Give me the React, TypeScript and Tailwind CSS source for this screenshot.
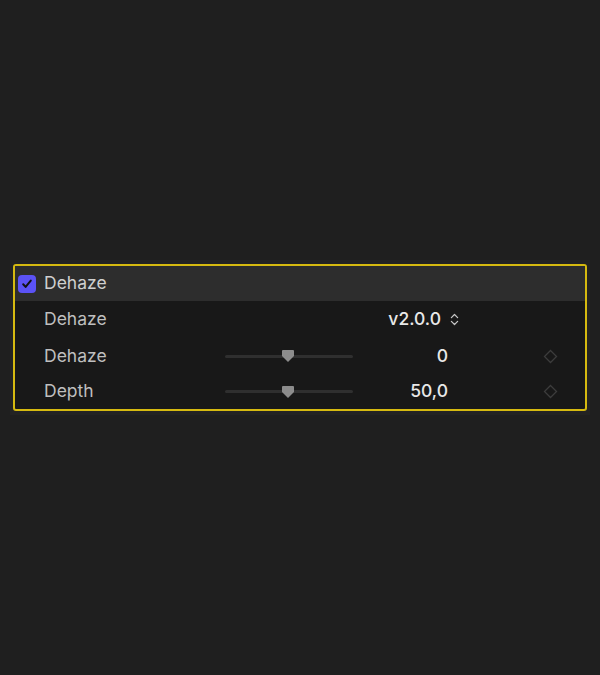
import { ChevronsUpDown } from "lucide-react";

const font = { fontFamily: "Inter, 'Noto Sans', sans-serif" };

const Slider = ({ pos }: { pos: number }) => (
  <div className="relative w-[128px] h-[16px] flex items-center">
    <div className="w-full h-[3px] rounded-full bg-[#2f2f2f]" />
    <svg
      className="absolute top-[1px]"
      style={{ left: pos - 7 }}
      width="14"
      height="14"
      viewBox="0 0 14 14"
    >
      <path d="M2 1h10a1 1 0 0 1 1 1v5l-6 6l-6-6V2a1 1 0 0 1 1-1z" fill="#8c8c8c" />
    </svg>
  </div>
);

const Diamond = () => (
  <svg width="15" height="15" viewBox="0 0 15 15">
    <path d="M7.5 1.5L13.5 7.5L7.5 13.5L1.5 7.5z" fill="none" stroke="#3c3c3c" strokeWidth="1.3" />
  </svg>
);

const App = () => {
  return (
    <div className="w-full h-[675px] bg-[#1f1f1f] pt-[260px]" style={font}>
      <div className="mx-[10px] px-[3px] py-[4px] bg-[#232323]">
        <div className="border-2 border-[#d6ba10] rounded-[3px] bg-[#181818] overflow-hidden">
          <div className="h-[35px] bg-[#2d2d2d] flex items-center pl-[3px]">
            <div className="w-[18px] h-[18px] rounded-[4px] bg-[#5b52f5] flex items-center justify-center">
              <svg width="12" height="12" viewBox="0 0 12 12">
                <path d="M2.2 6.3l2.4 2.6L9.8 2.6" fill="none" stroke="#111" strokeWidth="2" strokeLinecap="round" strokeLinejoin="round" />
              </svg>
            </div>
            <span className="ml-[8px] text-[17.5px] text-[#cfcfcf]">Dehaze</span>
          </div>
          <div className="h-[37px] flex items-center">
            <span className="w-[210px] pl-[29px] text-[17.5px] text-[#bfbfbf]">Dehaze</span>
            <div className="w-[237px] flex items-center justify-end">
              <span className="text-[17.5px] font-medium text-[#e8e8e8]">v2.0.0</span>
              <ChevronsUpDown className="ml-[6px] text-[#c4c4c4]" size={15} strokeWidth={2} />
            </div>
          </div>
          <div className="h-[36px] flex items-center">
            <span className="w-[210px] pl-[29px] text-[17.5px] text-[#bfbfbf]">Dehaze</span>
            <Slider pos={63} />
            <span className="w-[95px] text-right text-[17.5px] font-medium text-[#e8e8e8]">0</span>
            <div className="ml-[95px]">
              <Diamond />
            </div>
          </div>
          <div className="h-[35px] flex items-center">
            <span className="w-[210px] pl-[29px] text-[17.5px] text-[#bfbfbf]">Depth</span>
            <Slider pos={63} />
            <span className="w-[95px] text-right text-[17.5px] font-medium text-[#e8e8e8]">50,0</span>
            <div className="ml-[95px]">
              <Diamond />
            </div>
          </div>
        </div>
      </div>
    </div>
  );
};

export default App;
